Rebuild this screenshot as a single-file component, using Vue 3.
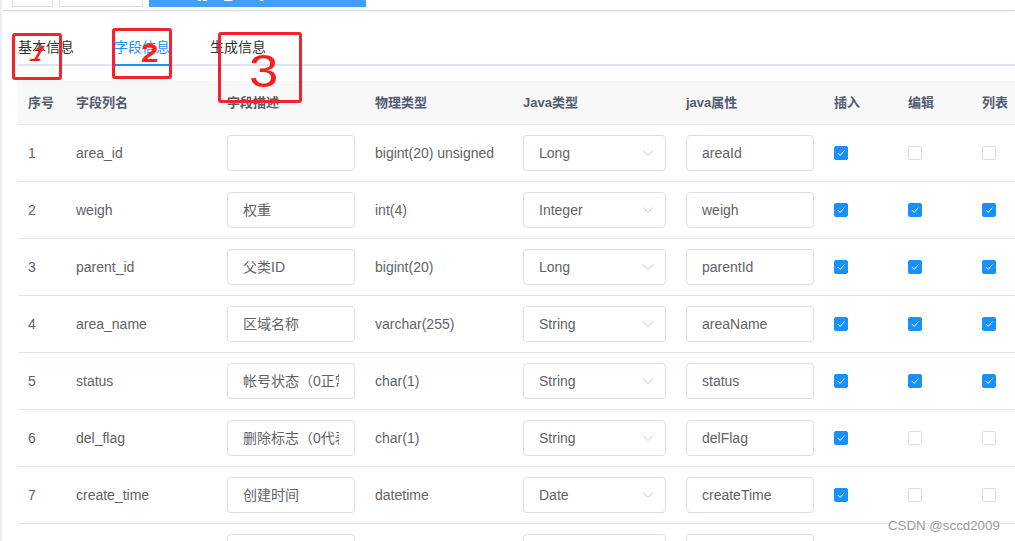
<script setup>
const rows = [
  { n: 1, col: 'area_id', desc: '', type: 'bigint(20) unsigned', java: 'Long', prop: 'areaId', ins: true, edit: false, list: false },
  { n: 2, col: 'weigh', desc: '权重', type: 'int(4)', java: 'Integer', prop: 'weigh', ins: true, edit: true, list: true },
  { n: 3, col: 'parent_id', desc: '父类ID', type: 'bigint(20)', java: 'Long', prop: 'parentId', ins: true, edit: true, list: true },
  { n: 4, col: 'area_name', desc: '区域名称', type: 'varchar(255)', java: 'String', prop: 'areaName', ins: true, edit: true, list: true },
  { n: 5, col: 'status', desc: '帐号状态（0正常 1停用）', type: 'char(1)', java: 'String', prop: 'status', ins: true, edit: true, list: true },
  { n: 6, col: 'del_flag', desc: '删除标志（0代表存在）', type: 'char(1)', java: 'String', prop: 'delFlag', ins: true, edit: false, list: false },
  { n: 7, col: 'create_time', desc: '创建时间', type: 'datetime', java: 'Date', prop: 'createTime', ins: true, edit: false, list: false },
  { n: 8, col: 'update_time', desc: '更新时间', type: 'datetime', java: 'Date', prop: 'updateTime', ins: true, edit: false, list: false }
]
const headers = ['序号', '字段列名', '字段描述', '物理类型', 'Java类型', 'java属性', '插入', '编辑', '列表']
const widths = [48, 151, 148, 148, 163, 148, 74, 74, 74]
const tabs = [
  { label: '基本信息', active: false },
  { label: '字段信息', active: true },
  { label: '生成信息', active: false }
]
</script>

<template>
  <div class="page">
    <div class="tagbar">
      <span class="tag tag-a"></span>
      <span class="tag tag-b"></span>
      <span class="tag tag-on">修改[gen_area]生成配置</span>
    </div>
    <main class="content">
      <div class="tabs">
        <span v-for="t in tabs" :key="t.label" class="tab" :class="{ active: t.active }">{{ t.label }}</span>
      </div>
      <table class="grid">
        <colgroup>
          <col v-for="(w, i) in widths" :key="i" :style="{ width: w + 'px' }" />
        </colgroup>
        <thead>
          <tr><th v-for="h in headers" :key="h">{{ h }}</th></tr>
        </thead>
        <tbody>
          <tr v-for="r in rows" :key="r.n">
            <td>{{ r.n }}</td>
            <td>{{ r.col }}</td>
            <td><input class="field desc" :value="r.desc" /></td>
            <td class="nowrap">{{ r.type }}</td>
            <td>
              <div class="select">
                <span>{{ r.java }}</span>
                <svg class="chev" width="12" height="8" viewBox="0 0 12 8"><path d="M1 1.5 L6 6.5 L11 1.5" fill="none" stroke="#c0c4cc" stroke-width="1" /></svg>
              </div>
            </td>
            <td><input class="field" :value="r.prop" /></td>
            <td v-for="k in ['ins', 'edit', 'list']" :key="k">
              <span class="check" :class="{ on: r[k] }">
                <svg v-if="r[k]" width="14" height="14" viewBox="0 0 14 14"><path d="M3.8 7 L6.2 9.4 L10.4 4.6" fill="none" stroke="#fff" stroke-width="1" /></svg>
              </span>
            </td>
          </tr>
        </tbody>
      </table>
    </main>
    <div class="mark mark-1"><b class="digit d1">1</b></div>
    <div class="mark mark-2"><b class="digit d2">2</b></div>
    <div class="mark mark-3"><b class="digit d3">3</b></div>
    <div class="watermark">CSDN @sccd2009</div>
  </div>
</template>

<style>
html, body { margin: 0; background: #fff; overflow: hidden; }
</style>

<style scoped>
.page {
  position: relative;
  width: 1015px;
  height: 541px;
  overflow: hidden;
  background: #fff;
  font-family: "Liberation Sans", "Noto Sans CJK SC", sans-serif;
  font-size: 14px;
  color: #606266;
}
.page::before {
  content: "";
  position: absolute;
  left: 0;
  top: 0;
  bottom: 0;
  width: 3px;
  background: linear-gradient(to right, #e6e8ee, #ffffff);
}
.tagbar {
  display: flex;
  gap: 6px;
  height: 10px;
  padding-left: 12px;
  border-bottom: 1px solid #d8dce5;
  box-shadow: 0 1px 2px rgba(0, 0, 0, 0.06);
  overflow: hidden;
}
.tag {
  display: block;
  box-sizing: border-box;
  height: 7px;
  border: 1px solid #d8dce5;
  border-top: 0;
  background: #fff;
}
.tag-a { width: 41px; }
.tag-b { width: 84px; }
.tag-on {
  width: 217px;
  border: 0;
  background: #409eff;
  color: #fff;
  font-size: 14px;
  line-height: 14px;
  padding: 0 0 7px 20px;
  display: flex;
  align-items: flex-end;
  white-space: nowrap;
  overflow: hidden;
}
.content { padding: 15px 0 0 18px; }
.tabs {
  display: flex;
  gap: 40px;
  height: 40px;
  box-sizing: border-box;
  border-bottom: 2px solid #dfe4ed;
  margin-bottom: 15px;
  color: #303133;
}
.tab {
  height: 40px;
  line-height: 42px;
  box-sizing: border-box;
}
.tab.active {
  color: #1890ff;
  border-bottom: 2px solid #1890ff;
}
.grid {
  table-layout: fixed;
  width: 1028px;
  border-collapse: separate;
  border-spacing: 0;
}
.grid th {
  height: 44px;
  padding: 0 0 2px 10px;
  box-sizing: border-box;
  background: #f8f8f9;
  border-bottom: 1px solid #dfe6ec;
  color: #515a6e;
  font-size: 13px;
  font-weight: 700;
  text-align: left;
  white-space: nowrap;
}
.grid td {
  height: 56px;
  padding: 0 0 0 10px;
  border-bottom: 1px solid #dfe6ec;
  font-size: 14px;
  white-space: nowrap;
  vertical-align: middle;
}
.field, .select {
  display: block;
  box-sizing: border-box;
  height: 36px;
  background: #fff;
  border: 1px solid #dcdfe6;
  border-radius: 4px;
  color: #606266;
  font: inherit;
  font-size: 14px;
}
.field {
  width: 128px;
  padding: 0 15px;
  outline: none;
}
.field.desc { padding-bottom: 2px; }
.select {
  width: 143px;
  padding: 0 11px 0 15px;
  display: flex;
  align-items: center;
  justify-content: space-between;
}
.check {
  display: block;
  box-sizing: border-box;
  width: 14px;
  height: 14px;
  border: 1px solid #dcdfe6;
  border-radius: 2px;
  background: #fff;
  position: relative;
}
.check.on {
  background: #1890ff;
  border-color: #1890ff;
}
.check svg {
  position: absolute;
  left: -1px;
  top: -1px;
}
.mark {
  position: absolute;
  box-sizing: border-box;
  border: 3px solid #f5222d;
  border-radius: 3px;
  pointer-events: none;
}
.mark-1 { left: 12px; top: 33px; width: 50px; height: 47px; }
.mark-2 { left: 112px; top: 28px; width: 60px; height: 51px; }
.mark-3 { left: 218px; top: 32px; width: 84px; height: 71px; }
.digit {
  position: absolute;
  color: #fb1d1d;
  font-family: "Liberation Sans", sans-serif;
  line-height: 1;
}
.d1 { left: 17px; top: 7px; font-size: 22px; font-weight: 700; transform: skewX(-30deg); }
.d2 { left: 26px; top: 10px; font-size: 25px; font-weight: 700; transform: scaleX(1.25); transform-origin: left center; }
.d3 { left: 28px; top: 12px; font-size: 47px; font-weight: 400; transform: scaleX(1.12); transform-origin: left center; }
.watermark {
  position: absolute;
  left: 888px;
  top: 518px;
  font-size: 13.3px;
  color: #9a9a9a;
  white-space: nowrap;
  background: rgba(255, 255, 255, 0.35);
}
</style>
